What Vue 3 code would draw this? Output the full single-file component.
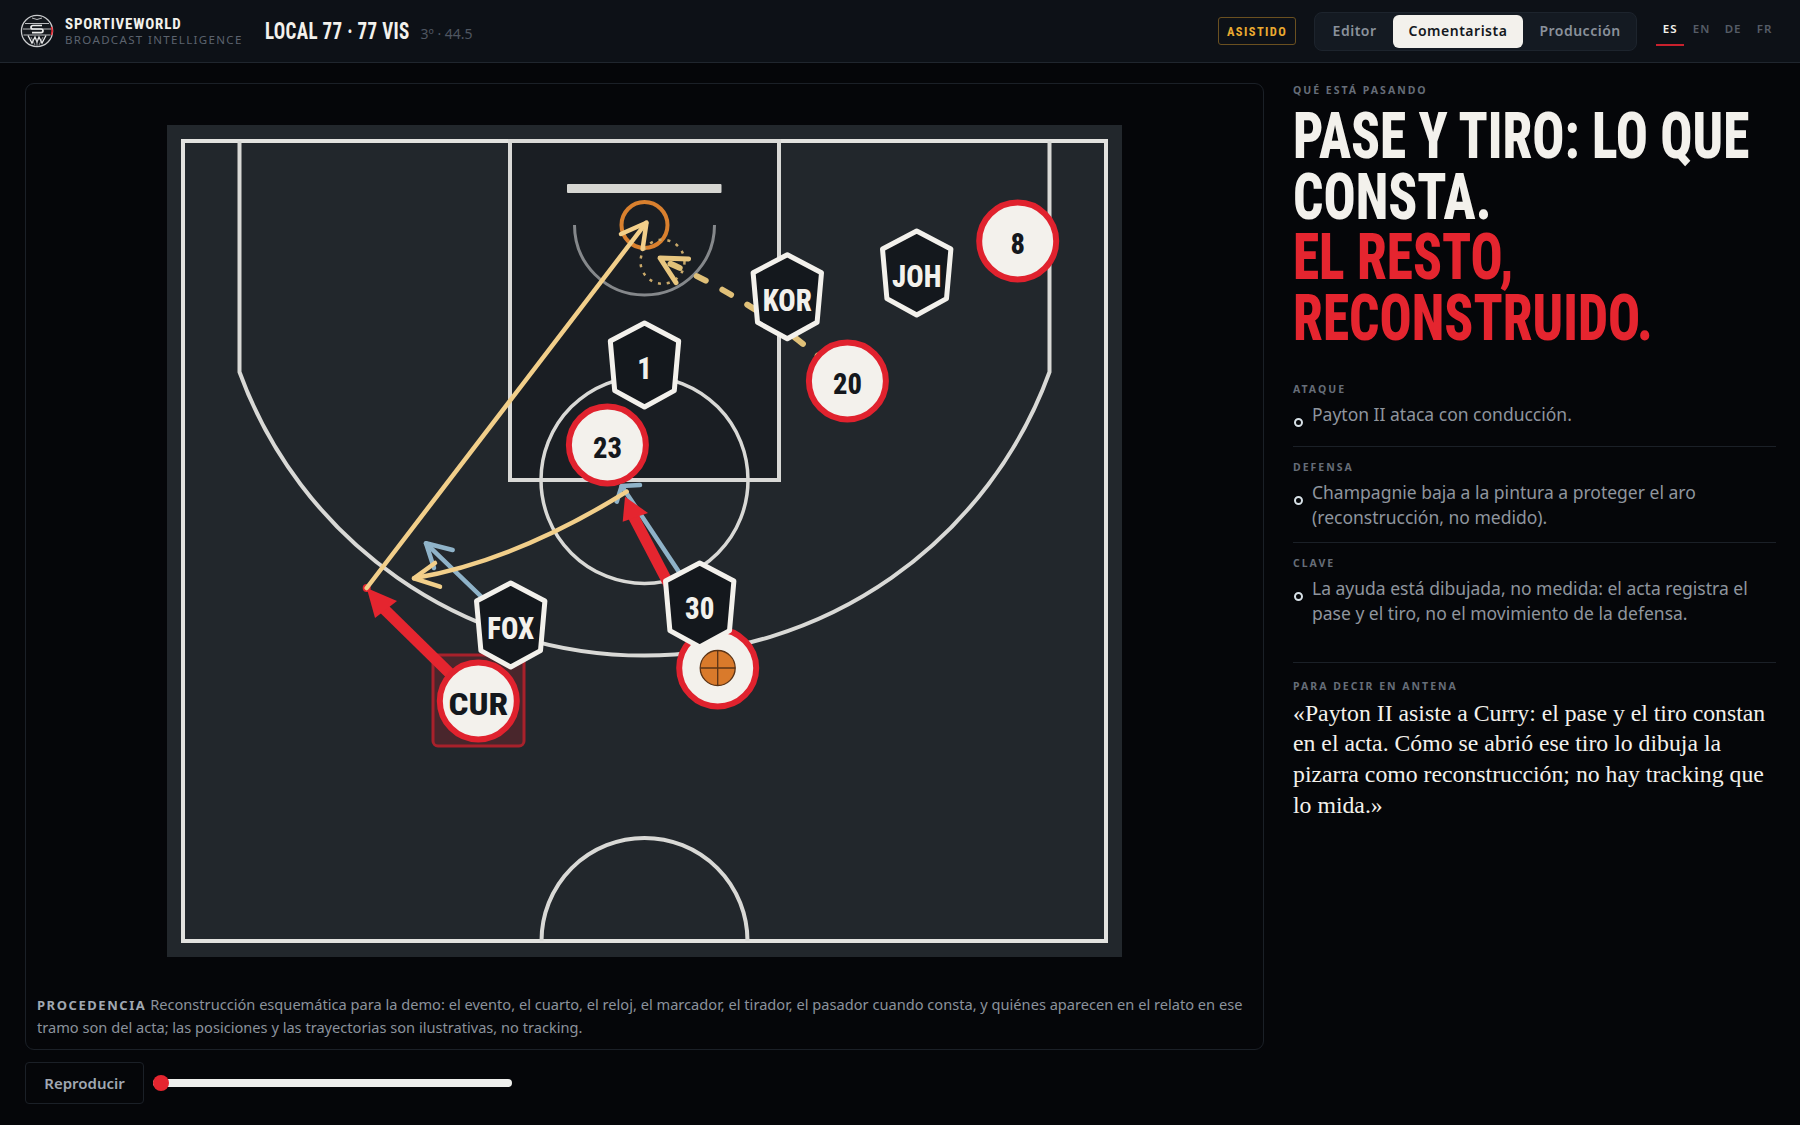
<script setup>
const discs = [
  { id: '8', x: 850.7, y: 116, size: 30, sx: 0.95, dy: 5 },
  { id: '20', x: 680.4, y: 256, size: 30, sx: 0.95, dy: 5 },
  { id: '23', x: 440.4, y: 320, size: 30, sx: 0.95, dy: 5 },
  { id: 'CUR', x: 311.3, y: 576, size: 31, sx: 1.13, dy: 6 },
]
const hexes = [
  { id: '1', x: 477.5, y: 240 },
  { id: 'KOR', x: 620.3, y: 171.7 },
  { id: 'JOH', x: 749.7, y: 148 },
  { id: '30', x: 532.7, y: 480 },
  { id: 'FOX', x: 343.7, y: 500 },
]
const hexPoints = '0,-42 34.2,-24 29.8,25.6 0,42 -29.8,25.6 -34.2,-24'
const notes = [
  { label: 'ATAQUE', text: 'Payton II ataca con conducción.' },
  { label: 'DEFENSA', text: 'Champagnie baja a la pintura a proteger el aro (reconstrucción, no medido).' },
  { label: 'CLAVE', text: 'La ayuda está dibujada, no medida: el acta registra el pase y el tiro, no el movimiento de la defensa.' },
]
</script>

<template>
  <div class="page">
    <header class="top">
      <div class="brand">
        <svg class="logo" viewBox="0 0 34 34" width="34" height="34">
          <circle cx="17" cy="17" r="15.6" fill="#14181d" stroke="#c9cbcd" stroke-width="1.3" />
          <path d="M5 9.5 H29 M3 15 H31 M3.5 21 H30.5" stroke="#b9bbbe" stroke-width="1" fill="none" />
          <path d="M12 4 Q17 7 22 4" stroke="#b9bbbe" stroke-width="1" fill="none" />
          <path d="M22 11.5 H13 Q11 11.5 11 13.2 Q11 15 13 15 H21 Q23 15 23 16.8 Q23 18.6 21 18.6 H12" stroke="#eceded" stroke-width="1.7" fill="none" />
          <path d="M8 21.5 L12 29 L15 23 L17 28 L19 23 L22 29 L26 21.5" stroke="#eceded" stroke-width="1.3" fill="none" />
          <path d="M11 23 L15 31 M23 23 L19 31 M17 24 V32" stroke="#a9abae" stroke-width=".8" fill="none" />
          <path d="M31.5 13 Q33 17 31.5 21" stroke="#e5252f" stroke-width="1.6" fill="none" />
        </svg>
        <div class="brand-text">
          <div class="brand-name">SPORTIVEWORLD</div>
          <div class="brand-sub">BROADCAST INTELLIGENCE</div>
        </div>
      </div>
      <div class="score">LOCAL 77 · 77 VIS</div>
      <div class="clock">3º · 44.5</div>
      <div class="spacer"></div>
      <div class="badge">ASISTIDO</div>
      <nav class="seg">
        <button class="seg-btn">Editor</button>
        <button class="seg-btn active">Comentarista</button>
        <button class="seg-btn">Producción</button>
      </nav>
      <nav class="langs">
        <span class="lang on">ES</span>
        <span class="lang">EN</span>
        <span class="lang">DE</span>
        <span class="lang">FR</span>
      </nav>
    </header>

    <main class="main">
      <section class="left">
        <div class="panel">
          <svg class="court" viewBox="0 0 955 832" width="955" height="832">
            <rect width="955" height="832" fill="#22272c" />
            <rect x="343" y="16" width="269" height="339" fill="#1a1e23" />
            <g fill="none" stroke="#d9d9d6">
              <rect x="16" y="16" width="923" height="800" stroke-width="4" stroke="#e2e2df" />
              <rect x="343" y="16" width="269" height="339" stroke-width="4" />
              <circle cx="477.5" cy="355" r="103.5" stroke-width="3.5" />
              <path d="M374.5 816 A103 103 0 0 1 580.5 816" stroke-width="4" />
              <path d="M72.5 16 V247 A431 431 0 0 0 882.5 247 V16" stroke-width="4" />
              <path d="M407.5 100 A70 70 0 0 0 547.5 100" stroke="#85888b" stroke-width="3" />
              <circle cx="477.5" cy="100" r="23" stroke="#d9802e" stroke-width="4" />
              <circle cx="495.5" cy="136.7" r="22" stroke="#c9a96a" stroke-width="2.5" stroke-dasharray="3 6" />
            </g>
            <rect x="400" y="59" width="154.5" height="9" rx="1" fill="#d6d6d2" />

            <rect x="266" y="530" width="91" height="91" rx="5" fill="#e5252f" fill-opacity=".2" stroke="#a8212b" stroke-width="3" />

            <g fill="none" stroke-linecap="round" stroke-linejoin="round">
              <path d="M680.4 256 Q590 175 497 136" stroke="#e0c078" stroke-width="6" stroke-dasharray="10 19" />
              <path d="M521.6 134 L493 133 L509 157.7" stroke="#e8c67f" stroke-width="5" />
              <path d="M343.7 500 L259 418.3" stroke="#8fb3c9" stroke-width="4.5" />
              <path d="M285.7 425 L259 418.3 L267 443" stroke="#8fb3c9" stroke-width="4.5" />
              <path d="M532.7 478 L454.7 361" stroke="#8fb3c9" stroke-width="4.5" />
              <path d="M473 360 L454.7 361 L449.7 376.7" stroke="#8fb3c9" stroke-width="4.5" />
              <path d="M510 475 L463 385" stroke="#e5252f" stroke-width="11" stroke-linecap="butt" />
              <path d="M311 576 L210 477" stroke="#e5252f" stroke-width="11" stroke-linecap="butt" />
            </g>
            <polygon points="458,371.7 455.7,396.7 481,388" fill="#e5252f" />
            <polygon points="199.7,463 208,493 230,476" fill="#e5252f" />
            <circle cx="199.7" cy="463" r="4" fill="#e5252f" />
            <g fill="none" stroke="#f2cf8a" stroke-width="4.5" stroke-linecap="round" stroke-linejoin="round">
              <path d="M199.7 463 L479 98" />
              <path d="M454 109 L479.5 97.7 L475.6 124" />
              <path d="M459.7 366.7 Q348 436 247 453.3" />
              <path d="M273 461.7 L247 453.3 L268 438" />
            </g>

            <g v-for="d in discs" :key="d.id" :transform="`translate(${d.x} ${d.y})`">
              <circle r="38.5" fill="#f3f1ec" stroke="#e0222e" stroke-width="6" />
              <text class="token dark" :y="d.dy" :transform="`scale(${d.sx} 1)`" :style="{ fontSize: d.size + 'px' }">{{ d.id }}</text>
            </g>
            <g transform="translate(550.7 543)">
              <circle r="38.5" fill="#f3f1ec" stroke="#e0222e" stroke-width="6" />
              <circle r="17.5" fill="#d97a2b" stroke="#5b3416" stroke-width="1.3" />
              <path d="M-17.5 0 H17.5 M0 -17.5 V17.5" stroke="#5b3416" stroke-width="1.3" />
            </g>
            <g v-for="h in hexes" :key="h.id" :transform="`translate(${h.x} ${h.y})`">
              <polygon :points="hexPoints" fill="#14181d" stroke="#f3f1ec" stroke-width="5" stroke-linejoin="round" />
              <text class="token light" y="5.5" transform="scale(.9 1)">{{ h.id }}</text>
            </g>
          </svg>
          <p class="prov"><b>PROCEDENCIA</b> Reconstrucción esquemática para la demo: el evento, el cuarto, el reloj, el marcador, el tirador, el pasador cuando consta, y quiénes aparecen en el relato en ese tramo son del acta; las posiciones y las trayectorias son ilustrativas, no tracking.</p>
        </div>
        <div class="controls">
          <button class="play">Reproducir</button>
          <div class="slider"><span class="thumb"></span></div>
        </div>
      </section>

      <aside class="right">
        <div class="eyebrow first">QUÉ ESTÁ PASANDO</div>
        <h1 class="headline">PASE Y TIRO: LO QUE<br />CONSTA.<br /><span class="red">EL RESTO,<br />RECONSTRUIDO.</span></h1>
        <div class="notes">
          <div v-for="n in notes" :key="n.label" class="note">
            <div class="eyebrow">{{ n.label }}</div>
            <div class="note-row">
              <span class="dot"></span>
              <p class="note-text">{{ n.text }}</p>
            </div>
          </div>
        </div>
        <div class="eyebrow antenna">PARA DECIR EN ANTENA</div>
        <p class="quote">«Payton II asiste a Curry: el pase y el tiro constan en el acta. Cómo se abrió ese tiro lo dibuja la pizarra como reconstrucción; no hay tracking que lo mida.»</p>
      </aside>
    </main>
  </div>
</template>

<style>
html, body { margin: 0; background: #050609; }
</style>

<style scoped>
.page {
  width: 1800px;
  height: 1125px;
  overflow: hidden;
  background: #050609;
  font-family: "Noto Sans", sans-serif;
  color: #f3f1ec;
}
.top {
  height: 63px;
  box-sizing: border-box;
  border-bottom: 1px solid #20262e;
  background: #0d1117;
  display: flex;
  align-items: center;
  padding: 0 21.4px 0 20px;
}
.brand { display: flex; align-items: center; gap: 11px; width: 245px; }
.logo { flex: none; }
.brand-text { display: flex; flex-direction: column; }
.brand-name,
.score,
.badge,
.headline,
.token {
  font-family: "Roboto", "Liberation Sans", sans-serif;
  font-stretch: 75%;
}
.brand-name { font-size: 15px; font-weight: 700; letter-spacing: .8px; line-height: 17px; }
.brand-sub { font-size: 11.5px; letter-spacing: 1.35px; color: #5c636e; line-height: 14px; }
.score {
  width: 145px;
  padding-top: 2px;
  font-size: 23px;
  font-weight: 700;
  letter-spacing: .4px;
  line-height: 30px;
  white-space: nowrap;
  transform: scaleX(.826);
  transform-origin: left center;
}
.clock { font-size: 14px; color: #4f5661; margin: 5px 0 0 10.5px; }
.spacer { flex: 1; }
.badge {
  box-sizing: border-box;
  height: 28px;
  width: 78px;
  border: 1px solid #6a5020;
  border-radius: 3px;
  color: #eaaa30;
  font-size: 12.5px;
  font-weight: 700;
  letter-spacing: 1.4px;
  display: flex;
  align-items: center;
  justify-content: center;
  margin-right: 18px;
}
.seg {
  box-sizing: border-box;
  height: 39px;
  width: 323px;
  display: flex;
  align-items: center;
  padding: 0 2px;
  gap: 1px;
  background: #141a22;
  border: 1px solid #1d242d;
  border-radius: 8px;
  margin-right: 19px;
}
.seg-btn {
  height: 33px;
  border: 0;
  border-radius: 6px;
  background: transparent;
  color: #8a919b;
  font: 600 14px "Noto Sans", sans-serif;
  letter-spacing: .5px;
  padding: 0 15.5px 2px;
}
.seg-btn.active { background: #f3f1ec; color: #14181d; }
.langs { display: flex; gap: 3.5px; }
.lang {
  box-sizing: border-box;
  width: 28px;
  padding-bottom: 7px;
  border-bottom: 2px solid transparent;
  text-align: center;
  font-size: 11.5px;
  font-weight: 600;
  letter-spacing: 1px;
  color: #555c66;
  line-height: 16px;
  margin-top: 5px;
}
.lang.on { color: #f3f1ec; border-bottom-color: #c8212d; }
.main {
  display: grid;
  grid-template-columns: 1239px 483px;
  column-gap: 29px;
  padding: 20px 24px 0 25px;
}
.left { display: flex; flex-direction: column; gap: 12px; }
.panel {
  box-sizing: border-box;
  height: 967px;
  border: 1px solid #1b2027;
  border-radius: 9px;
  padding: 41px 11px 0;
  display: flex;
  flex-direction: column;
}
.court { display: block; flex: none; align-self: center; }
.token {
  text-anchor: middle;
  dominant-baseline: middle;
  font-size: 32px;
  font-weight: 800;
}
.token.dark { fill: #14181d; }
.token.light { fill: #f3f1ec; }
.prov {
  margin: 36px 0 0;
  font-size: 14.62px;
  line-height: 22.2px;
  color: #8b929c;
}
.prov b { font-size: 13px; letter-spacing: 1.55px; color: #a0a8b2; font-weight: 700; }
.controls { display: flex; align-items: center; gap: 9px; }
.play {
  box-sizing: border-box;
  width: 119px;
  height: 42px;
  background: transparent;
  border: 1px solid #1b2027;
  border-radius: 4px;
  color: #a0a8b2;
  font: 600 15px "Noto Sans", sans-serif;
}
.slider {
  position: relative;
  width: 359px;
  height: 8px;
  border-radius: 4px;
  background: #eeeeec;
}
.thumb {
  position: absolute;
  left: 0;
  top: -4px;
  width: 16px;
  height: 16px;
  border-radius: 50%;
  background: #e5252f;
}
.eyebrow {
  font-size: 10.5px;
  font-weight: 700;
  letter-spacing: 2px;
  color: #666d78;
  line-height: 14px;
}
.headline {
  margin: 10px 0 0;
  font-size: 64px;
  font-weight: 800;
  line-height: 60.5px;
  color: #f3f1ec;
  white-space: nowrap;
  transform: scaleX(.834);
  transform-origin: left center;
}
.red { color: #e5252f; }
.notes { margin-top: 33px; }
.note { border-bottom: 1px solid #1b2027; padding-bottom: 19px; margin-bottom: 13.5px; }
.note:nth-child(2) { padding-bottom: 12px; }
.note:nth-child(3) { padding-bottom: 36px; margin-bottom: 16px; }
.note-row { display: flex; margin-top: 5.5px; }
.dot {
  flex: none;
  box-sizing: border-box;
  width: 9px;
  height: 9px;
  border: 2px solid #d7e0e6;
  border-radius: 50%;
  margin: 16px 9px 0 1px;
}
.note-text {
  margin: 0;
  font-size: 17.5px;
  line-height: 25px;
  color: #8f959e;
}
.quote {
  margin: 5px 0 0;
  font-family: "Liberation Serif", serif;
  font-size: 23.75px;
  line-height: 30.7px;
  color: #f3f1ec;
}
</style>
